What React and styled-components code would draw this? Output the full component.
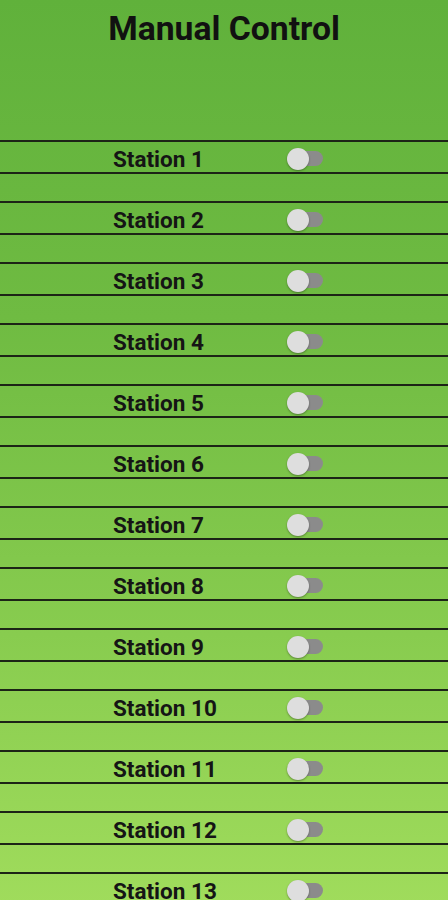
import React, { useState } from "react";
import styled, { createGlobalStyle } from "styled-components";

const Global = createGlobalStyle`
  html, body { margin: 0; padding: 0; }
  body {
    font-family: Roboto, "Liberation Sans", sans-serif;
    overflow: hidden;
  }
`;

const Page = styled.div`
  width: 448px;
  min-height: 900px;
  background: linear-gradient(180deg, #60b13b 0%, #6fbb42 35%, #88cc4f 70%, #a0dc5c 100%);
  color: #111;
`;

const Header = styled.header`
  height: 140px;
  box-sizing: border-box;
  padding-top: 9px;
  text-align: center;
`;

const Title = styled.h1`
  margin: 0;
  font-size: 33.7px;
  font-weight: 700;
  line-height: normal;
  color: #111;
`;

const List = styled.div`
  display: flex;
  flex-direction: column;
  gap: 27px;
`;

const Row = styled.div`
  height: 30px;
  box-sizing: content-box;
  border-top: 2px solid #1c2416;
  border-bottom: 2px solid #1c2416;
  display: grid;
  grid-template-columns: 174px auto;
  align-items: center;
  padding-left: 113px;
`;

const Label = styled.span`
  font-size: 22.5px;
  font-weight: 700;
  line-height: 26px;
  padding-top: 4px;
  color: #151515;
`;

const Switch = styled.button`
  display: inline-flex;
  align-items: center;
  justify-self: start;
  padding: 0;
  margin-top: 3px;
  border: 0;
  background: transparent;
  cursor: pointer;
  flex-direction: ${(p) => (p.$on ? "row-reverse" : "row")};
`;

const Thumb = styled.span`
  z-index: 1;
  width: 22px;
  height: 22px;
  border-radius: 50%;
  background: ${(p) => (p.$on ? "#2e7d32" : "#dedede")};
  box-shadow: 0 1px 2px rgba(0, 0, 0, 0.35);
`;

const Track = styled.span`
  width: 27px;
  height: 15px;
  margin: ${(p) => (p.$on ? "0 -13px 0 0" : "0 0 0 -13px")};
  border-radius: 7.5px;
  background: ${(p) => (p.$on ? "#9ed19a" : "#8b8b8b")};
`;

function Station({ n }) {
  const [on, setOn] = useState(false);
  return (
    <Row>
      <Label>Station {n}</Label>
      <Switch $on={on} aria-label={`Station ${n}`} onClick={() => setOn(!on)}>
        <Thumb $on={on} />
        <Track $on={on} />
      </Switch>
    </Row>
  );
}

export default function App() {
  const stations = Array.from({ length: 13 }, (_, i) => i + 1);
  return (
    <Page>
      <Global />
      <Header>
        <Title>Manual Control</Title>
      </Header>
      <List>
        {stations.map((n) => (
          <Station key={n} n={n} />
        ))}
      </List>
    </Page>
  );
}
